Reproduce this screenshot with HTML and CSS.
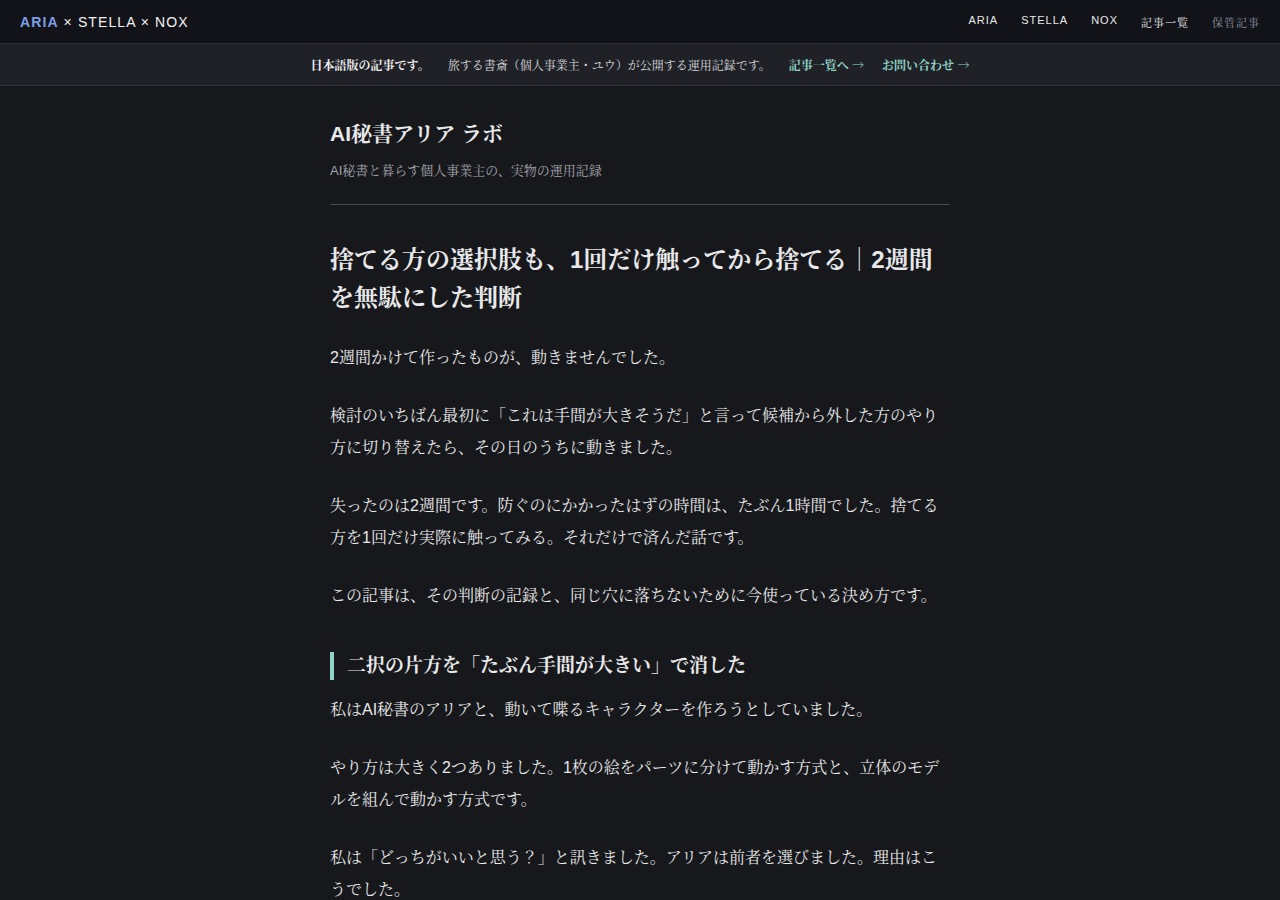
FILE: index.html
```html
<!DOCTYPE html>
<html lang="ja">
<head>
<meta charset="utf-8">
<title>AI秘書アリア ラボ</title>
<link rel="stylesheet" href="styles.css">
</head>
<body>
<header class="topbar">
  <div class="logo"><span class="logo-aria">ARIA</span> × STELLA × NOX</div>
  <nav class="topnav">
    <a href="#">ARIA</a>
    <a href="#">STELLA</a>
    <a href="#">NOX</a>
    <a href="#" class="jp">記事一覧</a>
    <a href="#" class="jp dim">保管記事</a>
  </nav>
</header>
<div class="notice">
  <strong>日本語版の記事です。</strong>
  <span class="notice-text">旅する書斎（個人事業主・ユウ）が公開する運用記録です。</span>
  <a href="#">記事一覧へ <span class="arrow">→</span></a>
  <a href="#">お問い合わせ <span class="arrow">→</span></a>
</div>
<main class="content">
  <div class="site-head">
    <div class="site-title">AI秘書アリア ラボ</div>
    <div class="site-sub">AI秘書と暮らす個人事業主の、実物の運用記録</div>
  </div>
  <article class="article">
    <h1>捨てる方の選択肢も、1回だけ触ってから捨てる｜2週間を無駄にした判断</h1>
    <p>2週間かけて作ったものが、動きませんでした。</p>
    <p>検討のいちばん最初に「これは手間が大きそうだ」と言って候補から外した方のやり方に切り替えたら、その日のうちに動きました。</p>
    <p>失ったのは2週間です。防ぐのにかかったはずの時間は、たぶん1時間でした。捨てる方を1回だけ実際に触ってみる。それだけで済んだ話です。</p>
    <p>この記事は、その判断の記録と、同じ穴に落ちないために今使っている決め方です。</p>
    <h2>二択の片方を「たぶん手間が大きい」で消した</h2>
    <p>私はAI秘書のアリアと、動いて喋るキャラクターを作ろうとしていました。</p>
    <p>やり方は大きく2つありました。1枚の絵をパーツに分けて動かす方式と、立体のモデルを組んで動かす方式です。</p>
    <p>私は「どっちがいいと思う？」と訊きました。アリアは前者を選びました。理由はこうでした。</p>
  </article>
</main>
</body>
</html>
```

FILE: styles.css
```css
* { box-sizing: border-box; }
html, body {
  margin: 0;
  padding: 0;
  background: #17181c;
  color: #e8e8ea;
  font-family: "Helvetica Neue", Arial, "Noto Serif CJK JP", "IPAMincho", serif;
}
a { text-decoration: none; color: inherit; }

.topbar {
  height: 44px;
  background: #121318;
  border-bottom: 1px solid #2c2e35;
  display: flex;
  align-items: center;
  justify-content: space-between;
  padding: 0 20px;
}
.logo {
  font-size: 14px;
  letter-spacing: 1.1px;
  color: #f2f2f4;
  font-weight: 500;
}
.logo-aria { color: #7e9ee6; font-weight: 700; }
.topnav {
  display: flex;
  gap: 23px;
  font-size: 11px;
  letter-spacing: 1px;
}
.topnav a { color: #e8e8ea; }
.topnav a.dim { color: #8c92a2; }

.notice {
  height: 42px;
  background: #1f2127;
  border-bottom: 1px solid #33353c;
  display: flex;
  align-items: center;
  justify-content: center;
  gap: 18px;
  font-size: 12px;
}
.notice strong { color: #f0f0f2; font-weight: 700; }
.notice-text { color: #d8d8dc; }
.notice a { color: #8fd3c6; font-weight: 700; }
.notice .arrow {
  font-family: "Noto Serif CJK JP", "Noto Sans CJK JP", serif;
  font-weight: 400;
}

.content {
  width: 620px;
  margin: 0 auto;
  padding-top: 34px;
}
.site-head {
  border-bottom: 1px solid #45474e;
  padding-bottom: 24px;
}
.site-title {
  font-size: 21px;
  font-weight: 700;
  line-height: 28px;
}
.site-sub {
  margin-top: 14px;
  font-size: 13px;
  color: #a3a5ad;
  line-height: 18px;
}
.article h1 {
  margin: 36px 0 25px;
  font-size: 24px;
  line-height: 38px;
  font-weight: 700;
}
.article p {
  margin: 0 0 26px;
  font-size: 16px;
  line-height: 32px;
  color: #e8e8ea;
}
.article h2 {
  margin: 40px 0 14px;
  font-size: 19px;
  line-height: 28px;
  border-left: 4px solid #8fd3c6;
  padding-left: 13px;
  font-weight: 700;
}
```
